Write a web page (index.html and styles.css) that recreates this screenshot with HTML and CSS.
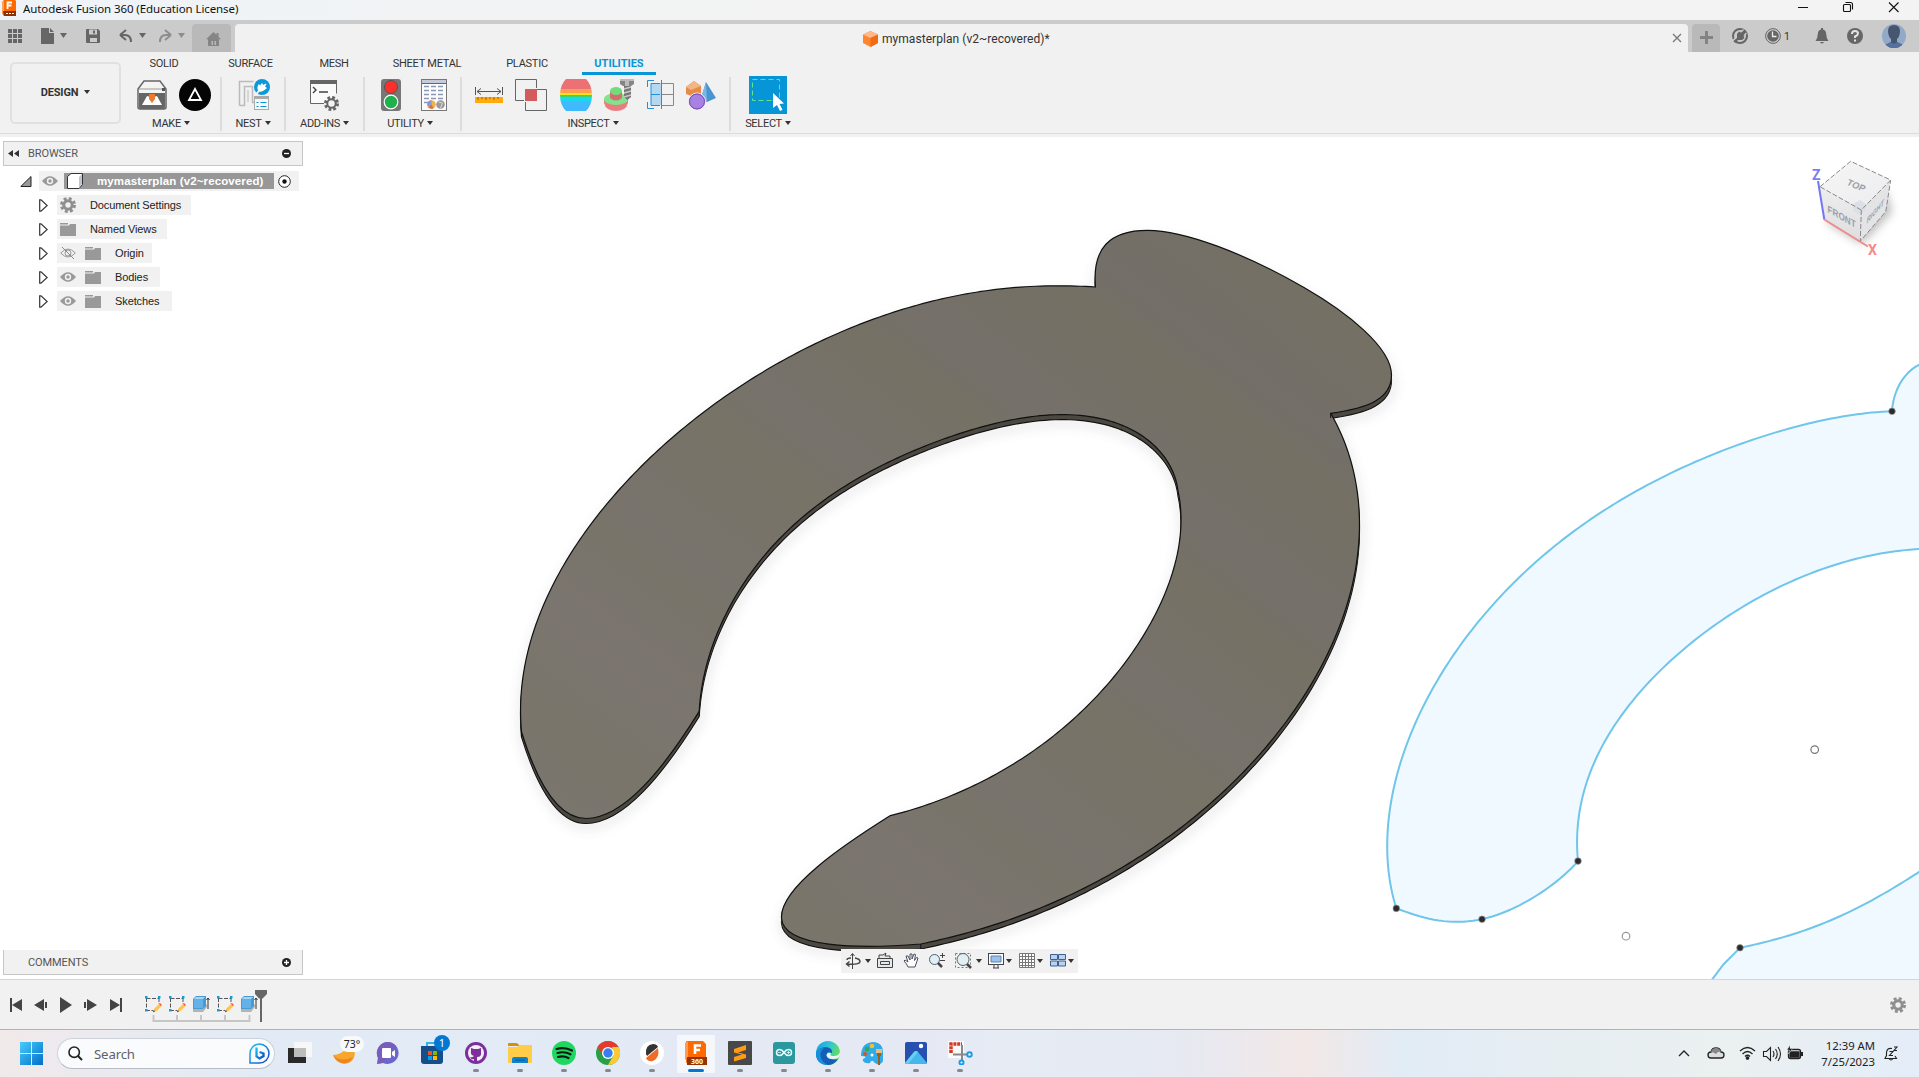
FILE: index.html
```
<!DOCTYPE html>
<html lang="en">
<head>
<meta charset="utf-8">
<title>Autodesk Fusion 360 (Education License)</title>
<link rel="stylesheet" href="styles.css">
</head>
<body>
<div class="app">
  <header class="titlebar">
    <svg class="app-icon" width="15" height="17" viewBox="0 0 15 17"><path d="M2 0h11l1 1v15H2L0 13V2z" fill="#ff6a00"/><path d="M0 2l2-2v12l-2 1z" fill="#ffa35c"/><path d="M1 11h13v5H2z" fill="#8c3200"/><path d="M5.500 9V2.500H10M5.500 5.500H9.500" stroke="#fff" stroke-width="1.800" fill="none"/><path d="M4 13.500h8" stroke="#fff" stroke-dasharray="2 1"/></svg>
    <span class="title">Autodesk Fusion 360 (Education License)</span>
    <svg class="win-buttons" width="110" height="20" viewBox="1790 0 110 20" fill="none" stroke="#111" stroke-width="1.100"><path d="M1798 7.500h10M1889 2.500l9.500 9.500M1898.500 2.500L1889 12"/><rect x="1843.500" y="4.500" width="7" height="7" rx="1"/><path d="M1845.500 2.500h5q2 0 2 2v5"/></svg>
  </header>

  <div class="tabbar">
    <div class="quick">
      <svg width="192" height="32" viewBox="0 20 192 32" fill="#666"><path d="M8 29h4v4H8zm5 0h4v4h-4zm5 0h4v4h-4zM8 34h4v4H8zm5 0h4v4h-4zm5 0h4v4h-4zM8 39h4v4H8zm5 0h4v4h-4zm5 0h4v4h-4z"/><path d="M41 28h8v5h5v11H41zM50 28l4 4h-4z"/><path d="M60 33h7l-3.500 5z"/><path d="M86 30q0-1 1-1h11l2 2v11q0 1-1 1H87q-1 0-1-1z"/><path d="M89 29.500h8v5h-8zM90 38h7v4h-7z" fill="#cbcbcb"/><path d="M93 30.500h2v3h-2z"/><path d="M120 35l6-5M120 35l6 5M120 35h5q6 0 6 7" fill="none" stroke="#666" stroke-width="2"/><path d="M139 33h7l-3.500 5z"/><g fill="#8d8d8d"><path d="M171 35l-6-5M171 35l-6 5M171 35h-5q-6 0-6 7" fill="none" stroke="#8d8d8d" stroke-width="2"/><path d="M178 33h7l-3.500 5z"/></g></svg>
      <div class="home-tab"><svg width="15" height="14" viewBox="0 0 15 14"><path d="M7.500 0l3 2.700V1h2v3.700L15 7.300h-2V14H2V7.300H0z" fill="#858585"/><path d="M5.500 9h1.500v4H5.500zM8.500 9h1.500v4H8.500z" fill="#b9b9b9"/></svg></div>
    </div>
    <div class="doc-tab">
      <div class="doc-name"><svg width="15" height="16" viewBox="0 0 15 16"><path d="M7.500 0L15 3.500v8.500L7.500 16 0 12V3.500z" fill="#ff852e"/><path d="M7.500 0L15 3.500 7.500 7 0 3.500z" fill="#ffb98a"/><path d="M7.500 7L15 3.500V12l-7.500 4z" fill="#f06c12"/></svg><span>mymasterplan (v2~recovered)*</span></div>
      <svg class="close" width="10" height="10" viewBox="0 0 10 10"><path d="M1 1l8 8M9 1L1 9" stroke="#777" stroke-width="1.300"/></svg>
    </div>
    <div class="plus-tab"><svg width="13" height="13" viewBox="0 0 13 13"><path d="M5 0h3v5h5v3H8v5H5V8H0V5h5z" fill="#838383"/></svg></div>
    <div class="account">
      <svg width="16" height="16" viewBox="0 0 16 16"><circle cx="8" cy="8" r="7" fill="none" stroke="#666" stroke-width="2"/><path d="M14 3l-3-1-2.500 2.500L7 3.500 5 6v4l-4 3 2.500 2L6 12h4l2.500-2-1-1.500L14 6l-1-1.500z" fill="#666"/><path d="M0 13.500l3.500-3.500M11.500 1.500L9 4M14.500 5L12 7.500" stroke="#cbcbcb" stroke-width="1.400"/></svg>
      <svg class="clock" width="16" height="16" viewBox="0 0 16 16"><circle cx="8" cy="8" r="7.400" fill="none" stroke="#666"/><circle cx="8" cy="8" r="5.800" fill="#666"/><path d="M7.500 3.500V8.500h4" stroke="#eee" stroke-width="1.300" fill="none"/></svg><span class="jobs">1</span>
      <svg class="bell" width="14" height="16" viewBox="0 0 14 16" fill="#666"><path d="M6 0h2v1.500Q11 2 11.200 6 11.300 10 13.500 13H.5Q2.700 10 2.800 6 3 2 6 1.500zM5 14h4q-2 3-4 0z"/></svg>
      <svg class="help" width="16" height="16" viewBox="0 0 16 16"><circle cx="8" cy="8" r="8" fill="#666"/><path d="M5 6q0-3 3-3t3 2.500Q11 7 8 8.500V10" stroke="#e2e2e2" stroke-width="2" fill="none"/><path d="M7 11.500h2v2H7z" fill="#e2e2e2"/></svg>
      <svg class="avatar" width="24" height="24" viewBox="0 0 24 24"><defs><clipPath id="round"><circle cx="12" cy="12" r="12"/></clipPath></defs><g clip-path="url(#round)"><path d="M0 0h24v24H0z" fill="#93a9c8"/><path d="M6 7Q6 1 12 1t6 6q0 5-3 8v3l6 3v3H3v-3l6-3v-3Q6 12 6 7z" fill="#46566f"/><path d="M3 21l6-3 3 2 3-2 6 3v3H3z" fill="#56719c"/></g></svg>
    </div>
  </div>

  <section class="ribbon">
    <div class="workspace"><b>DESIGN</b><i class="caret"></i></div>
    <div class="ribbon-main">
      <nav class="ribbon-tabs"><span class="t1">SOLID</span><span class="t2">SURFACE</span><span class="t3">MESH</span><span class="t4">SHEET METAL</span><span class="t5">PLASTIC</span><span class="t6 active">UTILITIES</span></nav>
      <div class="groups">
        <div class="group make"><div class="icons">
          <svg width="30" height="30" viewBox="0 0 30 30"><path d="M1 9L7 1h16l6 8v18q0 2-2 2H3q-2 0-2-2z" fill="#f4f4f4" stroke="#666" stroke-width="1.500"/><path d="M2 9h26" stroke="#999"/><path d="M25 8h3v3h-3z" fill="#555"/><path d="M2 13h26v14q0 2-2 2H4q-2 0-2-2z" fill="#666"/><path d="M5 25l5-9 3 1 2 4 2-4 3-1 5 9z" fill="#fff"/><path d="M12 14h6v5l-3 4-3-4z" fill="#e97b2e"/></svg>
          <svg width="32" height="32" viewBox="0 0 32 32"><circle cx="16" cy="16" r="16" fill="#050505"/><path d="M16 10l6 11H10z" fill="none" stroke="#fff" stroke-width="1.800"/></svg>
        </div><span>MAKE<i class="caret"></i></span></div>
        <div class="group nest"><div class="icons">
          <svg width="32" height="32" viewBox="0 0 32 32"><path d="M1.500 26.500v-24h14M1.500 26.500h5v-19h8v16h2" fill="none" stroke="#bbb" stroke-width="1.500"/><path d="M10 23v-12" stroke="#bbb"/><rect x="16.500" y="17.500" width="14" height="13" fill="#f7f7f7" stroke="#aaa"/><path d="M16 17h15v3H16z" fill="#aaa"/><path d="M18.500 23.500h2m2 0h6M18.500 27.500h2m2 0h6" stroke="#0696d7"/><circle cx="24" cy="8" r="8" fill="#0c98dc"/><path d="M18 14l2-2.500q-1.500-4 1-6.500l1 1.500L24 4l1.500 2L27.500 4.500l1 1L27 7.500l2 1.500-2.500 2q-3 2.500-5 1.500L19.500 15z" fill="#fff"/></svg>
        </div><span>NEST<i class="caret"></i></span></div>
        <div class="group addins"><div class="icons">
          <svg width="31" height="32" viewBox="0 0 31 32"><path d="M15 24.500H1.500v-22h26v12" fill="#fafafa" stroke="#666"/><path d="M1 1h27v4H1z" fill="#666"/><path d="M4 8l3 3-3 3M10 13h9" fill="none" stroke="#444" stroke-width="1.400"/><circle cx="22.500" cy="24.500" r="6" fill="none" stroke="#666" stroke-width="3" stroke-dasharray="2.700 2"/><circle cx="22.500" cy="24.500" r="4.200" fill="#f4f4f4" stroke="#666" stroke-width="2"/></svg>
        </div><span>ADD-INS<i class="caret"></i></span></div>
        <div class="group utility"><div class="icons">
          <svg width="20" height="32" viewBox="0 0 20 32"><rect width="20" height="32" rx="3" fill="#777"/><circle cx="10" cy="8" r="6.500" fill="#ff302c" stroke="#555"/><circle cx="10" cy="23" r="6.800" fill="#20b04c" stroke="#fff" stroke-width="1.200"/></svg>
          <svg width="26" height="32" viewBox="0 0 26 32"><rect x=".5" y=".5" width="25" height="31" fill="#fcfcfc" stroke="#777"/><path d="M1 1h24v3H1z" fill="#c7cad9"/><path d="M1 4.500h24" stroke="#666"/><path d="M3 7.500h20M3 11.500h20M3 15.500h20M3 19.500h20M3 23.500h5" stroke="#8b98b5" stroke-width="1.600" stroke-dasharray="5 2"/><circle cx="10.500" cy="25.500" r="4.300" fill="#efb24c"/><path d="M10.500 21.200a4.300 4.300 0 0 0-3.800 6.300l3.800-2z" fill="#8a94da"/><path d="M10.500 25.500l-3.300 2.800q3 2.500 5.300 1z" fill="#d66c4d"/><circle cx="19.500" cy="25.500" r="4.300" fill="#999"/><path d="M17.500 23l4 1-2 5" stroke="#ddd" fill="none"/></svg>
        </div><span>UTILITY<i class="caret"></i></span></div>
        <div class="group inspect"><div class="icons">
          <svg width="28" height="32" viewBox="0 0 28 32"><path d="M.5 8v8M27.500 8v8M2 12.500h24M6 9.500l-4 3 4 3M22 9.500l4 3-4 3" stroke="#555" fill="none"/><path d="M0 18h28v6H0z" fill="#ffab0f"/><path d="M3 18v3m4-3v2m4-2v3m4-3v2m4-2v3m4-3v2" stroke="#9a6300"/></svg>
          <svg width="32" height="32" viewBox="0 0 32 32"><path d="M9 21.500H.5V.5h21V9M22 10.500h9.500v21h-21V23" fill="none" stroke="#666"/><path d="M10 10h12v12H10z" fill="#d25b5e"/></svg>
          <svg width="32" height="32" viewBox="0 0 32 32"><defs><clipPath id="barrel"><path d="M6 0h20q6 6 6 16t-6 16H6Q0 26 0 16T6 0z"/></clipPath></defs><g clip-path="url(#barrel)"><path d="M0 0h32v10H0z" fill="#ec7175"/><path d="M0 10h32v4H0z" fill="#ff9d53"/><path d="M0 14h32v3H0z" fill="#f2e61b"/><path d="M0 16h32v2H0z" fill="#3cd36e"/><path d="M0 18h32v4H0z" fill="#1cd8ee"/><path d="M0 22h32v10H0z" fill="#41b9ff"/></g></svg>
          <svg width="30" height="32" viewBox="0 0 30 32"><path d="M0 20v4q2 8 12 8t12-8v-4z" fill="#ea7c80"/><ellipse cx="12" cy="20" rx="12" ry="6" fill="#80e58a"/><path d="M6 12v7q6 5 12 0v-7z" fill="#d66b70"/><ellipse cx="12" cy="12" rx="6" ry="4" fill="#72dc7d"/><path d="M20 6h7v12l-3.500 3-3.500-3z" fill="#757575"/><path d="M20 10l7-2M20 14l7-2M20 18l7-2" stroke="#c8c8c8" stroke-width="1.500"/><path d="M16 0h14v5l-3 2h-8l-3-2z" fill="#858585"/><path d="M16 0h14v2H16zM21 2h4v5h-4z" fill="#bbb"/></svg>
          <svg width="27" height="30" viewBox="0 0 27 30"><path d="M4 3h10v22H4z" fill="#b5d8f0"/><path d="M14 3.500h12.500v22H14M14 14.500h12" fill="none" stroke="#888"/><path d="M13 3.500H4v22h9M4 14.500h9M14.500 0v29M7 .5H.5V7M.5 22v6.500H7" fill="none" stroke="#238fdb"/></svg>
          <svg width="30" height="30" viewBox="0 0 30 30"><path d="M0 7l8-6 7 5v8l-7 3-8-3z" fill="#e78b4a"/><path d="M0 7l8-6 7 5-10 4z" fill="#f3b583"/><path d="M20 2l10 16-9 4-6-4z" fill="#4b94cf"/><path d="M20 2l1 20-6-4z" fill="#79b7e4"/><circle cx="11" cy="21.500" r="8.500" fill="#a981e2" stroke="#f1f1f1"/><circle cx="11" cy="21.500" r="7.500" fill="none" stroke="#7648b4"/></svg>
        </div><span>INSPECT<i class="caret"></i></span></div>
        <div class="group select"><div class="icons">
          <svg width="38" height="38" viewBox="0 0 38 38"><path d="M0 0h38v38H0z" fill="#0696d7"/><path d="M3.500 3.500h27v21h-27z" fill="none" stroke="#68e08c" stroke-dasharray="5 3"/><path d="M24 17v15l4-3 3 6 2.500-1.300-3-5.700 4.500-.5z" fill="#fff"/></svg>
        </div><span>SELECT<i class="caret"></i></span></div>
      </div>
    </div>
  </section>

  <main class="workarea">
    <svg class="canvas" id="canvas" viewBox="0 137 1919 842" width="1919" height="842">
      <defs>
        <linearGradient id="metal" gradientUnits="userSpaceOnUse" x1="640" y1="900" x2="1180" y2="190"><stop offset="0" stop-color="#7b756e"/><stop offset=".1" stop-color="#7a756b"/><stop offset=".2" stop-color="#7b756f"/><stop offset=".31" stop-color="#78746a"/><stop offset=".34" stop-color="#78736c"/><stop offset=".48" stop-color="#777367"/><stop offset=".53" stop-color="#77726b"/><stop offset=".66" stop-color="#757165"/><stop offset=".71" stop-color="#75706a"/><stop offset=".84" stop-color="#747064"/><stop offset=".88" stop-color="#736f69"/><stop offset="1" stop-color="#747064"/></linearGradient>
        <linearGradient id="cubeTop" x2="1" y2="1"><stop stop-color="#f6f6f6"/><stop offset="1" stop-color="#ececef"/></linearGradient>
        <linearGradient id="cubeSide" x2="0" y2="1"><stop stop-color="#eeeeef"/><stop offset="1" stop-color="#dedee0"/></linearGradient>
        <filter id="soft" x="-20%" y="-20%" width="140%" height="140%"><feGaussianBlur stdDeviation="6"/></filter>
        <filter id="cubeSoft" x="-40%" y="-40%" width="180%" height="180%"><feGaussianBlur stdDeviation="5"/></filter>
      </defs>
      <g id="body"></g>
      <g id="sketch"></g>
      <g>
        <path d="M1826 222l36 22 30-32-6-20-40 10z" fill="#999" opacity=".65" filter="url(#cubeSoft)"/>
        <path d="M1820 186.700L1850.700 161.300 1890.700 180 1861.300 210z" fill="url(#cubeTop)"/>
        <path d="M1820 186.700L1861.300 210 1860.300 241 1824.300 219.300z" fill="url(#cubeSide)"/>
        <path d="M1861.300 210L1890.700 180 1885.700 211.700 1860.300 241z" fill="#e4e4e6"/>
        <path d="M1853 204l7-4 6 4-1 7-5 4-7-4z" fill="#dcdfe6"/>
        <path d="M1820 186.700L1850.700 161.300 1890.700 180 1861.300 210zM1861.300 210L1860.300 241 1885.700 211.700 1890.700 180" fill="none" stroke="#8a8a8a" stroke-dasharray="5 2"/>
        <path d="M1818 181l6.300 38.500" stroke="#7676f0" stroke-width="2"/><path d="M1824.300 219.500L1868 246.500" stroke="#f08a8a" stroke-width="2"/>
        <text transform="matrix(.86 .36 -.45 .8 1846 184.500)" class="face">TOP</text>
        <text transform="matrix(.82 .47 0 1 1827.500 212)" class="face">FRONT</text>
        <text transform="matrix(.55 -.62 -.1 .9 1866.500 224)" class="face">RIGHT</text>
        <text x="1812" y="180" class="axis z">Z</text><text x="1868" y="255" class="axis x">X</text>
      </g>
    </svg>

    <aside class="side">
      <div class="panel-head"><svg width="11" height="7" viewBox="0 0 11 7"><path d="M5 0v7L0 3.500zM11 0v7L6 3.500z" fill="#333"/></svg><span>BROWSER</span><svg class="pm" width="9" height="9" viewBox="0 0 9 9"><circle cx="4.500" cy="4.500" r="4.500" fill="#222"/><path d="M2 4.500h5" stroke="#fff" stroke-width="1.300"/></svg></div>
      <div class="tree">
        <div class="row root"><svg class="open" width="12" height="11" viewBox="0 0 12 11"><path d="M11 .5v10H.8z" fill="#999" stroke="#222"/></svg><div class="item"><svg width="16" height="12" viewBox="0 0 16 12"><use href="#eye"/></svg><div class="selected"><svg width="16" height="16" viewBox="0 0 16 16"><path d="M.5 3.500L4 .5h11.500v11L12 15.500H.5z" fill="#fff" stroke="#333"/><path d="M12 4v11l3-4V1z" fill="#bfc5cc"/></svg><b>mymasterplan (v2~recovered)</b></div><svg class="radio" width="13" height="13" viewBox="0 0 13 13"><circle cx="6.500" cy="6.500" r="5.800" fill="#fff" stroke="#222"/><circle cx="6.500" cy="6.500" r="2.200" fill="#111"/></svg></div></div>
        <div class="row"><svg class="arrow" width="9" height="13"><use href="#tri"/></svg><div class="item w134"><svg width="16" height="16" viewBox="0 0 16 16"><use href="#gear"/></svg><span>Document Settings</span></div></div>
        <div class="row"><svg class="arrow" width="9" height="13"><use href="#tri"/></svg><div class="item w110"><svg width="16" height="13" viewBox="0 0 16 13"><use href="#folder"/></svg><span>Named Views</span></div></div>
        <div class="row"><svg class="arrow" width="9" height="13"><use href="#tri"/></svg><div class="item w95"><svg width="16" height="12" viewBox="0 0 16 12"><path d="M.7 6Q8-2 15.300 6 8 14 .7 6z" fill="none" stroke="#999"/><circle cx="8" cy="6" r="3" fill="none" stroke="#999"/><path d="M2 0l12 12" stroke="#888"/></svg><svg class="second" width="16" height="13" viewBox="0 0 16 13"><use href="#folder"/></svg><span>Origin</span></div></div>
        <div class="row"><svg class="arrow" width="9" height="13"><use href="#tri"/></svg><div class="item w103"><svg width="16" height="12" viewBox="0 0 16 12"><use href="#eye"/></svg><svg class="second" width="16" height="13" viewBox="0 0 16 13"><use href="#folder"/></svg><span>Bodies</span></div></div>
        <div class="row"><svg class="arrow" width="9" height="13"><use href="#tri"/></svg><div class="item w115"><svg width="16" height="12" viewBox="0 0 16 12"><use href="#eye"/></svg><svg class="second" width="16" height="13" viewBox="0 0 16 13"><use href="#folder"/></svg><span>Sketches</span></div></div>
      </div>
      <div class="panel-head comments"><span>COMMENTS</span><svg class="pm" width="9" height="9" viewBox="0 0 9 9"><circle cx="4.500" cy="4.500" r="4.500" fill="#222"/><path d="M2 4.500h5M4.500 2v5" stroke="#fff" stroke-width="1.300"/></svg></div>
    </aside>

    <div class="viewbar">
      <svg width="237" height="24" viewBox="841 949 237 24" fill="none" stroke="#444">
        <path d="M852.500 954v15M850.500 956l2-2.500 2 2.500"/><path d="M855 958q5 1 5 3.500 0 3.500-13 2.500M847 960q0-2 4-2M849.500 961.500l-3 2.500 3 2.500" stroke-width="1.400"/>
        <g fill="#333" stroke="none"><path d="M865 959h6l-3 4zM976 959h6l-3 4zM1006 959h6l-3 4zM1037 959h6l-3 4zM1068 959h6l-3 4z"/></g>
        <path d="M877.500 958.500h15v9h-15zM880.500 961.500h9v3h-9zM879 958v-3h4l3-2-1 3h5v2" fill="#e5e8ed"/>
        <path d="M908 967q-1-3-4-6l1-1 3 2-2-6 2 0 2 4V954h2v5l2-5 1.500.5-1 6 2-3 1.500.5-3 9z" fill="#fff" stroke="#48505e"/>
        <circle cx="934.500" cy="959.500" r="5" fill="#dff0f4" stroke="#52606e"/><path d="M938 963l4 4" stroke-width="2.500"/><path d="M940 955.500h5M942.500 953v5M940 960.500h5"/>
        <rect x="955.500" y="953.500" width="15" height="14" stroke-dasharray="2 2" stroke="#777"/><circle cx="963" cy="959.500" r="6" fill="#e1eff3" stroke="#52606e"/><path d="M967 964l4 4" stroke-width="2.500"/>
        <rect x="988.500" y="953.500" width="15" height="11" fill="#fff"/><path d="M991 956h10v6h-10z" fill="#9dc1ea" stroke="#5d83b5"/><path d="M993 968h6m-5-3v3m4-3v3"/>
        <path d="M1019.500 953.500h15v14h-15zM1022.500 953v15m3-15v15m3-15v15m3-15v15M1019 956.500h15m-15 3h15m-15 3h15m-15 3h15" fill="#fff" stroke="#777"/>
        <path d="M1050.500 954.500h7v5h-7zm8 0h7v5h-7zm-8 6.500h7v5h-7zm8 0h7v5h-7z" fill="#b9d2f3" stroke="#3e608f"/>
      </svg>
    </div>
  </main>

  <footer class="timeline">
    <svg width="280" height="48" viewBox="0 980 280 48">
      <g fill="#444"><path d="M10 997h2v14h-2zM12 1004l10-6v12zM34 1004l10-6v12zM45 1001h2v6h-2zM60 996l12 8-12 8zM84 1001h2v6h-2zM87 998l10 6-10 6zM110 998l10 6-10 6zM120 997h2v14h-2z"/></g>
      <path d="M153.500 1014v6h96v-6M177 1014v6M201 1014v6M225 1014v6" stroke="#c6c6c6" stroke-width="2" fill="none"/>
      <g id="sk"><path d="M146.500 997.500h13M146.500 997v13M159 997v6M146 1009.500h7" stroke="#555" fill="none" stroke-dasharray="4 1.500"/><path d="M145 995h2.500v2.500H145zM158 995h2.500v2.500H158zM145 1008h2.500v2.500H145z" fill="#159be0"/><path d="M154 1008l5-5 2.500 2-5 5-3 1z" fill="#ffc14e"/><path d="M159 1003l1-1 2 2-1 1z" fill="#f0544c"/><path d="M153 1010l1-1 1 1.500-2 .7z" fill="#555"/></g>
      <use href="#sk" x="24"/><use href="#sk" x="72"/>
      <g id="ex"><path d="M193 1007h10l4-4v3l-4 5h-10z" fill="#b3b3b3"/><path d="M193 998l3-3h10v10l-3 3h-10z" fill="#4999d2"/><path d="M194 998h9v9h-9z" fill="#64b1e7"/><path d="M194 998l2-2h9l-2 2z" fill="#a7d6f4"/><path d="M208 1008v-11m-1.500 2l1.500-2 1.500 2" stroke="#333" fill="none"/></g><use href="#ex" x="48"/>
      <path d="M255 989h12v4l-4.500 4.500H259l-4-4.500zM260 997h2v24h-2z" fill="#666"/>
    </svg>
    <svg width="16" height="16" viewBox="0 0 16 16"><use href="#gear"/></svg>
  </footer>

  <footer class="taskbar">
    <svg class="start" width="23" height="23" viewBox="0 0 23 23"><defs><linearGradient id="win" x2="1" y2="1"><stop stop-color="#49cdfb"/><stop offset="1" stop-color="#006ecb"/></linearGradient></defs><path d="M0 0h11v11H0zM12 0h11v11H12zM0 12h11v11H0zM12 12h11v11H12z" fill="url(#win)"/></svg>
    <div class="search"><svg width="15" height="15" viewBox="0 0 15 15"><circle cx="6.200" cy="6.200" r="5.200" fill="none" stroke="#222" stroke-width="1.600"/><path d="M10 10l4 4" stroke="#222" stroke-width="2"/></svg><span>Search</span><svg class="bing" width="21" height="21" viewBox="0 0 21 21"><defs><linearGradient id="bg" x2="1" y2="1"><stop stop-color="#20c0ef"/><stop offset="1" stop-color="#1748bd"/></linearGradient></defs><path d="M1 20v-9.500a9.500 9.500 0 1 1 9.500 9.500z" fill="#f5fbff" stroke="url(#bg)" stroke-width="1.500"/><path d="M7.500 4.500v9l3 2 4-2.500v-2.500l-4-1.500" stroke="url(#bg)" stroke-width="2.300" fill="none"/></svg></div>
    <div class="apps">
      <div class="cell"><svg width="24" height="24" viewBox="0 0 24 24"><path d="M0 7h18v15H0z" fill="#2a2a2a"/><path d="M6 1h18v15H6z" fill="#f7f7f7"/><path d="M6 7h12v9H6z" fill="#bdbdbd"/></svg></div>
      <div class="cell weather"><svg width="24" height="24" viewBox="0 0 24 24"><path d="M1 14q8 0 14-7 4 0 8 5-1 11-11 11Q4 22 1 14z" fill="#f6a72c"/><path d="M1 14q8 8 20 2-4 7-10 6-7-1-10-8z" fill="#ed8424"/></svg><span class="temp">73°</span></div>
      <div class="cell"><svg width="24" height="24" viewBox="0 0 24 24"><path d="M12 1a11 11 0 1 1-5 21L1 23l1-6A11 11 0 0 1 12 1z" fill="#6c65d0"/><path d="M12 1a11 11 0 0 0-10 16l-1 6 6-1L20 5q-3-4-8-4z" fill="#805aae" opacity=".6"/><rect x="6" y="7" width="9" height="10" rx="1" fill="#fff"/><path d="M16 11l3-2v7l-3-2z" fill="#fff"/></svg></div>
      <div class="cell store"><svg width="24" height="24" viewBox="0 0 24 24"><path d="M7 6V2h10v4" fill="none" stroke="#32b4e9" stroke-width="2"/><path d="M1 5h22v15q0 3-3 3H4q-3 0-3-3z" fill="#154e8b"/><path d="M8 10h4v4H8z" fill="#f25022"/><path d="M13 10h4v4h-4z" fill="#7fba00"/><path d="M8 15h4v4H8z" fill="#00a4ef"/><path d="M13 15h4v4h-4z" fill="#ffb900"/></svg><span class="badge">1</span></div>
      <div class="cell run"><svg width="24" height="24" viewBox="0 0 24 24"><circle cx="12" cy="12" r="11" fill="#7b2e9c"/><circle cx="12" cy="12" r="8" fill="#f5eff8"/><path d="M7 7l3 1h4l3-1v4q1 5-4 5v5h-3v-3q-3 1-4-2 2 1 4-1-4-1-3-5z" fill="#7b2e9c"/></svg></div>
      <div class="cell run"><svg width="24" height="24" viewBox="0 0 24 24"><path d="M0 3q0-1 1-1h8l3 3H0z" fill="#d99000"/><path d="M0 6h9l3-2h12v17q0 1-1 1H1q-1 0-1-1z" fill="#ffcd48"/><path d="M4 22v-4q0-2 2-2h12q2 0 2 2v4z" fill="#1182d0"/><path d="M7 19h10" stroke="#075b9c"/></svg></div>
      <div class="cell run"><svg width="24" height="24" viewBox="0 0 24 24"><circle cx="12" cy="12" r="12" fill="#1ed760"/><path d="M4.500 8q8-2.500 15.500 1.500M5.500 12q7-2 13 1.300M6 16q5.500-1.500 10.500 1" stroke="#101a12" stroke-width="2.200" stroke-linecap="round" fill="none"/></svg></div>
      <div class="cell run"><svg width="24" height="24" viewBox="0 0 24 24"><circle cx="12" cy="12" r="12" fill="#26a148"/><path d="M22.400 6A12 12 0 0 1 12 24l5.200-9-1-9z" fill="#fcc934"/><path d="M1.600 6A12 12 0 0 1 22.400 6H12L6.800 15z" fill="#e33b2e"/><circle cx="12" cy="12" r="6" fill="#fff"/><circle cx="12" cy="12" r="4.700" fill="#377ef1"/></svg></div>
      <div class="cell run"><svg width="24" height="24" viewBox="0 0 24 24"><circle cx="12" cy="12" r="12" fill="#fff"/><path d="M6 13Q5 4 13 3q4 0 5 3L7 15z" fill="#333"/><path d="M6 17L18 7q2 10-5 13-5 1-7-3z" fill="#ef6b26"/></svg></div>
      <div class="cell run current"><svg width="24" height="24" viewBox="0 0 24 24"><path d="M2 0h17l3 3v21H4l-2-3z" fill="#ff6a00"/><path d="M1 2l3-2v16l-3 3z" fill="#ff9a50"/><path d="M3 16h20v8H3z" fill="#933500"/><path d="M11 13V4.500h6M11 9h5" stroke="#fff" stroke-width="2.600" fill="none"/><text x="7" y="22.500" class="tiny">360</text></svg></div>
      <div class="cell run"><svg width="24" height="24" viewBox="0 0 24 24"><rect width="24" height="24" rx="1" fill="#484848"/><path d="M6 8l12-4v5l-8 2.500 8 2V17L6 20.500V16l8-2.500-8-2z" fill="#ff9b16"/></svg></div>
      <div class="cell run"><svg width="24" height="24" viewBox="0 0 24 24"><rect x="1" y="1" width="22" height="22" rx="3" fill="#2a989d"/><path d="M12 11.500q-2-3-4.500-3a3 3 0 0 0 0 6q2.500 0 4.500-3t4.500-3a3 3 0 0 1 0 6q-2.500 0-4.500-3z" fill="none" stroke="#e2ffff" stroke-width="1.500"/><path d="M6 11.500h3m6 0h3m-1.500-1.500v3" stroke="#fff" stroke-width=".7"/></svg></div>
      <div class="cell run"><svg width="24" height="24" viewBox="0 0 24 24"><defs><linearGradient id="edge" x2="1" y2=".4"><stop stop-color="#159ce2"/><stop offset=".55" stop-color="#2fc6d5"/><stop offset="1" stop-color="#65e05a"/></linearGradient></defs><circle cx="12" cy="12" r="12" fill="url(#edge)"/><path d="M0 12Q3 6 10 6q7 1 6 6-1 0-3-1-3 1-2 4 3 5 11 3-4 6-10 6Q0 23 0 12z" fill="#155db7"/><path d="M0 12q2-5 8-5-5 4-3 10 2 5 7 7Q0 24 0 12z" fill="#168fdc"/><path d="M12 12q-3 2 0 5 4 2 10 0 3-3 2-6-1 4-6 4-5 0-3-3z" fill="#ecf3f9"/></svg></div>
      <div class="cell run"><svg width="24" height="24" viewBox="0 0 24 24"><path d="M1 15Q1 1 14 1q9 1 9 10v9q-2 4-6 3-3-1-4-3-2-1-3 2-5 1-7-2-1-2 2-3 2-2-4-2z" fill="#31aae8"/><circle cx="7" cy="8" r="2.300" fill="#2baa52"/><circle cx="12" cy="5" r="2.300" fill="#f8bd28"/><circle cx="5" cy="13" r="2" fill="#d6542a"/><circle cx="12" cy="14" r="1.500" fill="#fff"/><path d="M17 8h4v7h-1v9h-2v-9h-1z" fill="#976026"/><path d="M16 8h6v4h-6z" fill="#e5bd83"/></svg></div>
      <div class="cell run"><svg width="24" height="24" viewBox="0 0 24 24"><rect x="1" y="1" width="22" height="22" rx="2" fill="#274faf"/><path d="M1 22l9-11q2-2 4 0l9 11q-1 1-2 1H3z" fill="#46b7ed"/><path d="M1 22l9-11q2-2 4 0L4 23z" fill="#68cff7"/><circle cx="17" cy="5" r="2.200" fill="#fff"/></svg></div>
      <div class="cell run"><svg width="26" height="24" viewBox="0 0 26 24"><path d="M1 0h16v17H1z" fill="#fafafa"/><path d="M4 12V3h11" stroke="#cf3b25" stroke-width="3.500" stroke-dasharray="3 .8" fill="none"/><path d="M15 4v15M6 13.500h15" stroke="#888" stroke-width="2"/><circle cx="22.500" cy="13.500" r="2.200" fill="#fff" stroke="#169de4" stroke-width="2"/><circle cx="14.500" cy="21.500" r="2" fill="#fff" stroke="#169de4" stroke-width="2"/></svg></div>
    </div>
    <div class="tray">
      <svg width="130" height="24" viewBox="1675 1041 130 24" fill="none" stroke="#222" stroke-width="1.300"><path d="M1680 1055l5-5 5 5"/><path d="M1712 1057q-3 0-3-3t3-3q1-4 5-4t5 4q3 0 3 3t-3 3z" fill="#ddd"/><path d="M1712 1051q1-4 5-4t5 4q-3-1-5 2-3-2-5-2z" fill="#888" stroke="none"/><path d="M1741 1050q7.500-7 15 0M1743.500 1053q5-5 10 0M1746 1055.500q2.500-2.500 5 0"/><circle cx="1748.500" cy="1057" r="1.200" fill="#222"/><path d="M1764.500 1050.500h3l4-4v13l-4-4h-3zM1774 1050q2 3 0 6M1776.500 1048q3.500 5 0 10M1779 1046q5 7 0 14" stroke-width="1.100"/><rect x="1789.500" y="1048.500" width="12" height="9" rx="2"/><path d="M1791 1051h9v5h-9z" fill="#222"/><path d="M1803 1051v4" stroke-width="2"/><path d="M1791 1044l-3 5h2.500l-1 4 4-5.500h-2.500z" fill="#111" stroke="#e8eef6" stroke-width=".5"/></svg>
      <div class="datetime"><span>12:39 AM</span><span>7/25/2023</span></div>
      <svg class="zz" width="15" height="16" viewBox="0 0 15 16" fill="none" stroke="#222" stroke-width="1.100"><path d="M8 2.500q-5-1-5.500 4v3L1 12.500h11.500L11 10M5 12.500q2 3 4 0M5.500 5.500h3.500l-3.500 4h3.500M10 1h3l-3 3.500h3"/></svg>
    </div>
  </footer>
</div>

<svg class="symbols" width="0" height="0"><defs>
  <g id="eye"><path d="M0 6Q8-3.500 16 6 8 15.500 0 6z" fill="#999"/><circle cx="8" cy="6" r="3.200" fill="#f1f1f1"/><circle cx="8" cy="6" r="1.700" fill="#999"/></g>
  <g id="folder" fill="#999"><path d="M0 0h8v1.500H0zM0 2.500h9l1-1.500h6v12H0z"/></g>
  <path id="tri" d="M.7 .8H2L8.200 6.500 2 12.200H.7z" fill="#fff" stroke="#333" stroke-width="1.200"/>
  <g id="gear"><circle cx="8" cy="8" r="6.500" fill="none" stroke="#8f8f8f" stroke-width="3" stroke-dasharray="2.900 2.200"/><circle cx="8" cy="8" r="4.200" fill="none" stroke="#8f8f8f" stroke-width="3"/></g>
</defs></svg>
<script src="viewport.js"></script>
</body>
</html>
```
FILE: styles.css
```
* { box-sizing: border-box; }
body { margin: 0; font-family: Roboto, "Liberation Sans", sans-serif; font-size: 11px; color: #333; background: #fff; overflow: hidden; }
svg { display: block; flex: none; }
.symbols { position: absolute; }
.app { width: 1919px; height: 1077px; display: grid; grid-template-rows: 20px 32px 85px 842px 51px 47px; }

.titlebar { display: flex; background: linear-gradient(90deg, #eff3f8, #f3f3f3 40%); color: #111; font: 11.5px "Noto Sans", sans-serif; }
.app-icon { margin-left: 2px; }
.title { margin-left: 6px; line-height: 18px; letter-spacing: -.09px; white-space: nowrap; }
.win-buttons { margin-left: auto; margin-right: 19px; }

.tabbar { display: flex; background: #cbcbcb; padding-right: 2px; }
.quick { display: flex; width: 235px; align-items: flex-end; }
.home-tab { width: 39px; height: 28px; background: #b9b9b9; border-radius: 4px 4px 0 0; padding: 8px 0 0 14px; }
.doc-tab { margin-top: 4px; width: 1453px; background: #f1f1f1; border-radius: 4px 4px 0 0; display: flex; align-items: center; }
.doc-name { display: flex; gap: 4px; margin-left: 628px; align-items: center; font-size: 12px; color: #333; letter-spacing: .05px; padding-top: 1px; white-space: nowrap; }
.close { margin-left: auto; margin-right: 6px; }
.plus-tab { margin: 4px 0 0 4px; width: 28px; background: #b9b9b9; border-radius: 4px 4px 0 0; padding: 7px 0 0 8px; }
.account { display: flex; align-items: center; margin-left: 12px; }
.clock { margin-left: 17px; }
.jobs { width: 8px; margin-left: 3px; font-size: 10.5px; }
.bell { margin-left: 23px; }
.help { margin-left: 18px; }
.avatar { margin-left: 19px; }

.ribbon { display: flex; background: linear-gradient(#f1f1f1 81px, #dcdcdc 81px, #dcdcdc 82px, #f1f1f1 82px); }
.workspace { margin: 10px 0 0 10px; width: 111px; height: 62px; border: 2px solid #e1e1e1; border-radius: 5px; display: flex; align-items: center; justify-content: center; gap: 6px; padding-bottom: 2px; letter-spacing: -.15px; }
.caret { display: inline-block; border: 3px solid transparent; border-top: 4px solid #333; border-bottom: 0; }
.ribbon-tabs { display: flex; height: 23px; line-height: 23px; letter-spacing: -.25px; text-align: center; }
.ribbon-tabs span { display: block; }
.t1 { width: 86px; }
.t2 { width: 87px; }
.t3 { width: 80px; }
.t4 { width: 106px; }
.t5 { width: 94px; }
.t6 { width: 74px; margin-left: 8px; }
.active { color: #0696d7; font-weight: bold; border-bottom: 3px solid #0696d7; letter-spacing: 0; }
.groups { display: flex; height: 57px; padding-top: 2px; }
.group { height: 54px; border-right: 2px solid #dcdcdc; display: flex; flex-direction: column; justify-content: space-between; align-items: center; letter-spacing: -.3px; }
.group > span { line-height: 14px; white-space: nowrap; }
.group .caret { margin-left: 3px; vertical-align: 2px; }
.icons { display: flex; height: 34px; align-items: center; gap: 12px; margin-top: 1px; }
.make { width: 101px; }
.make .icons { padding-left: 6px; }
.make > span { padding-left: 1px; }
.nest { width: 64px; }
.nest .icons { padding-left: 2px; }
.addins { width: 79px; }
.utility { width: 97px; padding-right: 5px; }
.utility .icons { gap: 20px; padding-left: 8px; }
.inspect { width: 269px; padding-right: 5px; }
.inspect .icons { gap: 12.5px; padding-left: 5px; }
.select { width: 74px; border: 0; }
.select .icons { height: 36px; margin-top: 0; }

.workarea { display: grid; grid-template: 842px / 1919px; overflow: hidden; position: relative; }
.canvas, .side, .viewbar { grid-area: 1 / 1; }
.face { font: bold 10px "Liberation Sans", sans-serif; fill: #9b9ea6; }
.axis { font: bold 14px Roboto, sans-serif; }
.z { fill: #7c7cf2; }
.x { fill: #f48a8a; }
.side { width: 303px; padding: 4px 0 4px 3px; display: flex; flex-direction: column; }
.panel-head { display: flex; align-items: center; height: 25px; background: #f1f1f1; border: 1px solid #c6c6c6; color: #555; padding: 0 11px 0 4px; letter-spacing: -.1px; }
.panel-head span { margin-left: 9px; }
.pm { margin-left: auto; }
.comments { margin-top: auto; border-top: 0; padding-left: 15px; }
.tree { padding: 5px 0 0 36px; font: 11px "Liberation Sans", sans-serif; color: #222; }
.row { display: flex; height: 20px; margin-bottom: 4px; align-items: center; }
.item { display: flex; align-items: center; margin-left: 9px; padding-left: 3px; height: 20px; background: #f1f1f1; white-space: nowrap; }
.item span { margin-left: 14px; letter-spacing: -.1px; }
.second { margin-left: 9px; }
.root { margin-left: -19px; }
.root .item { width: 260px; margin-left: 7px; }
.selected { display: flex; align-items: center; width: 210px; height: 16px; margin-left: 6px; padding-left: 3px; background: #979797; color: #fff; }
.selected b { margin-left: 14px; font-size: 11.5px; letter-spacing: .12px; }
.radio { margin-left: 4px; }
.w134 { width: 134px; }
.w110 { width: 110px; }
.w95 { width: 95px; }
.w103 { width: 103px; }
.w115 { width: 115px; }
.viewbar { align-self: end; margin: 0 0 6px 841px; width: 237px; height: 24px; background: #f1f1f1; }

.timeline { display: flex; justify-content: space-between; align-items: center; background: #f1f1f1; border-top: 1px solid #d6d6d6; border-bottom: 1px solid #aeb2ba; padding-right: 13px; }

.taskbar { display: flex; align-items: center; background: linear-gradient(90deg, #f1e9ea, #e2ebf5 13%, #e3eaf5 35%, #e6e9f4 48%, #e6ecf4 54%, #e7e9f1 62%, #f2e8e7 68%, #e2ecf5 73%, #ebf0f0 90%, #e4edf8); font-family: "Noto Sans", sans-serif; color: #222; }
.start { margin-left: 20px; }
.search { margin: 0 0 0 14px; width: 218px; height: 31px; border: 1px solid #cdd2da; border-bottom-color: #b7bcc5; border-radius: 16px; background: #fafbfd; display: flex; align-items: center; padding: 0 4px 0 10px; font-size: 13.2px; color: #5d6065; }
.search span { margin-left: 11px; letter-spacing: -.15px; }
.bing { margin-left: auto; }
.apps { display: flex; margin-left: 3px; }
.cell { width: 44px; height: 47px; padding-bottom: 1px; display: flex; align-items: center; justify-content: center; position: relative; }
.run::after { content: ""; position: absolute; bottom: 5px; left: 19px; width: 6px; height: 3px; border-radius: 2px; background: #85898f; }
.current { background: linear-gradient(#f5f7fb, #f5f7fb) center / 38px 38px no-repeat; }
.current::after { left: 14px; width: 16px; background: #0078d4; }
.tiny { font: bold 7px "Noto Sans", sans-serif; fill: #fff; }
.temp { position: absolute; top: 6px; left: 18px; width: 24px; height: 16px; border-radius: 9px; background: #f8f9fb; font-size: 10.5px; line-height: 16px; text-align: center; }
.badge { position: absolute; top: 5px; left: 24px; width: 16px; height: 16px; border-radius: 8px; background: #0078d4; color: #fff; font-size: 11px; line-height: 16px; text-align: center; }
.tray { margin-left: auto; display: flex; align-items: center; padding-right: 20px; }
.datetime { display: flex; flex-direction: column; width: 70px; margin-left: 1px; text-align: right; font-size: 11.3px; line-height: 16px; white-space: nowrap; }
.zz { margin-left: 9px; }
```
FILE: viewport.js
```
// An outline is a list of edges. A list of sample points becomes a smooth curve
// fitted with both ends pinned; a string is path data appended as it stands.
const NS = "http://www.w3.org/2000/svg";

function solve(m, v) {
  const n = v.length;
  for (let i = 0; i < n; i++) {
    let p = i;
    for (let r = i + 1; r < n; r++) if (Math.abs(m[r][i]) > Math.abs(m[p][i])) p = r;
    [m[i], m[p]] = [m[p], m[i]];
    [v[i], v[p]] = [v[p], v[i]];
    for (let r = i + 1; r < n; r++) {
      const f = m[r][i] / m[i][i];
      for (let c = i; c < n; c++) m[r][c] -= f * m[i][c];
      v[r] -= f * v[i];
    }
  }
  const x = Array(n).fill(0);
  for (let i = n - 1; i >= 0; i--) {
    let s = v[i];
    for (let c = i + 1; c < n; c++) s -= m[i][c] * x[c];
    x[i] = s / m[i][i];
  }
  return x;
}

function fitEdge(points) {
  const n = points.length, first = points[0], last = points[n - 1];
  if (n < 4) return points;
  const t = [0];
  for (let i = 1; i < n; i++) t.push(t[i - 1] + Math.hypot(points[i][0] - points[i - 1][0], points[i][1] - points[i - 1][1]));
  const total = t[n - 1];
  for (let i = 0; i < n; i++) t[i] /= total;
  const terms = Math.min(6, Math.floor(n / 2));
  // Chebyshev terms times t(1-t), which vanishes at both ends.
  const basis = u => Array.from({ length: terms }, (_, k) => u * (1 - u) * Math.cos(k * Math.acos(Math.max(-1, Math.min(1, 2 * u - 1)))));
  const coef = [0, 1].map(axis => {
    const m = Array.from({ length: terms }, () => Array(terms).fill(0)), v = Array(terms).fill(0);
    for (let i = 1; i < n - 1; i++) {
      const b = basis(t[i]), y = points[i][axis] - first[axis] * (1 - t[i]) - last[axis] * t[i];
      for (let r = 0; r < terms; r++) {
        v[r] += b[r] * y;
        for (let c = 0; c < terms; c++) m[r][c] += b[r] * b[c];
      }
    }
    return solve(m, v);
  });
  const steps = Math.ceil(total / 5), out = [];
  for (let s = 0; s <= steps; s++) {
    const u = s / steps, b = basis(u);
    out.push([0, 1].map(axis => first[axis] * (1 - u) + last[axis] * u + b.reduce((sum, x, k) => sum + x * coef[axis][k], 0)));
  }
  return out;
}

function outline(start, edges) {
  return "M" + start + edges.map(e => typeof e === "string" ? e : fitEdge(e).map(p => "L" + p[0].toFixed(2) + " " + p[1].toFixed(2)).join("")).join("");
}

function add(parent, name, attrs) {
  const el = document.createElementNS(NS, name);
  for (const k in attrs) el.setAttribute(k, attrs[k]);
  parent.appendChild(el);
}

const plate = outline("1095.5 287", [
  "C1092 248 1110 230.3 1147.5 230.3C1184 230.3 1245 253.5 1304 287.5C1346 311.700 1391.5 347 1391.5 375C1391.5 399 1368 408 1330.7 413.3",
  [[1330.7,413.3],[1342,435],[1350.7,461.8],[1357,490],[1359.4,524.8],[1357.5,560],[1349.6,594],[1326.6,655.6],[1289,718.7],[1237.7,776.8],[1188.9,822],[1131.5,861.7],[1074,893],[1005,921.3],[920.8,944]],
  "C860 949 783 948 781.500 918C780 888 842 846 890.4 815.6",
  [[890.4,815.6],[947.8,797],[1016.6,762],[1074,718.7],[1120,669],[1157.3,611],[1175,562],[1181.4,524.8],[1178,490.8]],
  [[1178,490.8],[1172,472.5],[1163,456],[1149,440],[1131.5,428.5],[1115,422],[1097,418],[1056.8,415.9],[993.7,423.5],[936.3,441.5],[867.4,473],[804,516],[752.6,571],[727,611],[712,648],[702,685],[699.2,711.4]],
  "C664 768 624 818.500 586 818.5C557 818.5 536 779 521.5 731.8",
  [[521.5,731.8],[521.2,710],[525.2,665],[535,625],[551.7,586],[575,548],[603.3,509.5],[636,472],[672,436.5],[718,401],[769.8,368.7],[818,343],[867,321],[915,305.5],[959,295.4],[1005,288.5],[1051,285.8],[1095.5,287]]
]) + "Z";

const body = document.getElementById("body");
add(body, "path", { d: plate, fill: "none", stroke: "#8a8a8a", "stroke-width": 3, opacity: .45, transform: "translate(1 8)", filter: "url(#soft)" });
add(body, "path", { d: plate, fill: "#4c4942", stroke: "#111", "stroke-width": 1.2, transform: "translate(0 5)" });
for (let z = 4; z > 0; z--) add(body, "path", { d: plate, fill: "#4c4942", transform: `translate(0 ${z})` });
add(body, "path", { d: plate, fill: "url(#metal)", stroke: "#111", "stroke-width": 1.2, "stroke-linejoin": "round" });
add(body, "path", { d: "M920.8 944v6M521.5 732v5M699.2 711v5M1330.7 413v5", stroke: "#111" });

const sketch = document.getElementById("sketch");
const upper = outline("1925 362.5", [
  [[1925,362.5],[1919,365],[1905.7,375.2],[1896.5,391],[1892,411.3]],
  [[1892,411.3],[1839.2,417.5],[1790,427.9],[1741,443.6],[1685,466.9],[1625.6,497.5],[1580,526.4],[1531,566],[1482,617.5],[1443.5,671],[1415.5,722.4],[1398,771.2],[1389.3,812.6],[1387.2,843.7],[1389.5,877],[1396.3,908.4]],
  [[1396.3,908.4],[1426,918],[1455.8,921.7],[1482,919.2],[1504,912.5],[1527,901],[1553,884.3],[1578,861.1]],
  [[1578,861.1],[1577,840],[1582,800],[1597.6,754.6],[1625.6,710.2],[1667.6,663.4],[1720,621.5],[1772.7,590.4],[1825.2,568],[1874.2,554.8],[1919,549],[1930,548.5]]
]);
const lower = outline("1930 865", [
  [[1930,865],[1919,871.5],[1877.7,897.5],[1832,919.4],[1786,936.5],[1740,947.8]],
  [[1740,947.8],[1723.6,964.2],[1708,985]]
]);
add(sketch, "path", { d: upper, fill: "#eff9ff", stroke: "#70c5ea", "stroke-width": 2 });
add(sketch, "path", { d: lower + "L1930 985Z", fill: "#eff9ff", stroke: "#70c5ea", "stroke-width": 2 });
for (const [cx, cy] of [[1892,411.3],[1396.3,908.4],[1482,919.2],[1578,861.1],[1740,947.8]])
  add(sketch, "circle", { cx, cy, r: 3.3, fill: "#2b2b2b", stroke: "#999", "stroke-width": .7 });
add(sketch, "circle", { cx: 1814.7, cy: 749.6, r: 3.8, fill: "none", stroke: "#777", "stroke-width": 1.2 });
add(sketch, "circle", { cx: 1626, cy: 936.2, r: 3.8, fill: "none", stroke: "#999", "stroke-width": 1.2 });
```
